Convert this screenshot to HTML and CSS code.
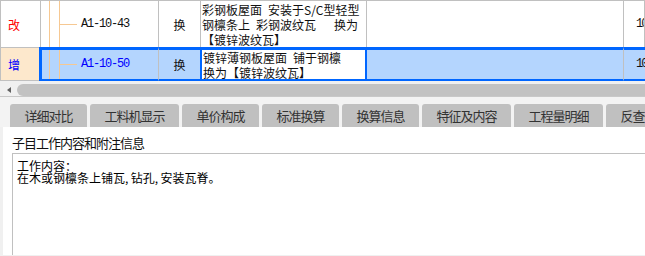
FILE: index.html
```html
<!DOCTYPE html>
<html lang="zh-CN">
<head>
<meta charset="utf-8">
<title>子目工作内容</title>
<link rel="stylesheet" href="styles.css">
</head>
<body>
<div class="grid">
  <div class="row r1">
    <div class="c c0 mod">改</div>
    <div class="c c1"><span class="sp"></span><span class="vl"></span><span class="vl br"><i class="hl"></i></span><span class="code">A1-10-43</span></div>
    <div class="c c2">换</div>
    <div class="c c3"><div class="desc">彩钢板屋面&ensp;安装于S/C型轻型<br>钢檩条上&ensp;彩钢波纹瓦&ensp;&ensp;&ensp;换为<br>【镀锌波纹瓦】</div></div>
    <div class="c c4"></div>
    <div class="c c5"><span class="code">10</span></div>
  </div>
  <div class="row r2">
    <div class="c c0 add">增</div>
    <div class="c c1"><span class="sp"></span><span class="vl"></span><span class="vl br"><i class="hl"></i></span><span class="code blue">A1-10-50</span></div>
    <div class="c c2">换</div>
    <div class="c c3"><div class="desc">镀锌薄钢板屋面&ensp;铺于钢檩<br>换为【镀锌波纹瓦】</div></div>
    <div class="c c4"></div>
    <div class="c c5"><span class="code">10</span></div>
  </div>
</div>
<div class="hscroll">
  <span class="arrow"></span>
  <span class="thumb"></span>
</div>
<div class="tabs">
  <div class="tab">详细对比</div>
  <div class="tab">工料机显示</div>
  <div class="tab">单价构成</div>
  <div class="tab">标准换算</div>
  <div class="tab">换算信息</div>
  <div class="tab">特征及内容</div>
  <div class="tab">工程量明细</div>
  <div class="tab">反查</div>
</div>
<div class="panel">
  <div class="label">子目工作内容和附注信息</div>
  <div class="box">
    <div class="line">工作内容：</div>
    <div class="line">在木或钢檩条上铺瓦,&#8201;钻孔,&#8201;安装瓦脊。</div>
  </div>
</div>
</body>
</html>
```
FILE: styles.css
```css
html, body {
  margin: 0;
  padding: 0;
}
body {
  width: 645px;
  height: 256px;
  overflow: hidden;
  background: #f0f0f0;
  font-family: "Noto Sans CJK SC", "Noto Sans", sans-serif;
  color: #111;
}

.grid {
  background: #fff;
}
.row {
  display: grid;
}
.r1 {
  grid-template-columns: 41px 118px 42px 166px 257px 1fr;
  height: 47px;
  box-sizing: border-box;
  border-top: 1px solid #c0c0c0;
}
.r2 {
  grid-template-columns: 39px 120px 41px 167px 257px 1fr;
  height: 34px;
}
.c {
  box-sizing: border-box;
  border-right: 1px solid #c0c0c0;
  display: flex;
  align-items: center;
  font-size: 12px;
  line-height: 15px;
  overflow: hidden;
  white-space: nowrap;
}
.c0 {
  border-left: 1px solid #c0c0c0;
  padding-left: 7px;
  font-size: 12px;
}
.mod { color: #f00; }
.r2 .c0.add {
  color: #0000ff;
  background: #fde8cc;
  border-top: 1px solid #c0c0c0;
  border-bottom: 1px solid #c0c0c0;
  border-right: none;
}
.r2 .c:not(.c0) {
  background: #b4d5fe;
  border-top: 3px solid #0066ff;
  border-bottom: 2px solid #0066ff;
}
.r2 .c1 {
  border-left: 3px solid #0066ff;
}
.r2 .c2 { border-right: none; }
.r2 .c5 { border-right: none; }
.r2 .c.c3 {
  background: #fff;
  border: 2px solid #0066ff;
  border-top-width: 3px;
  padding-left: 1px;
}
.r1 .c3 { padding-left: 1px; }

.c1 { align-items: stretch; }
.sp { width: 8px; flex: none; }
.r2 .sp { width: 7px; }
.vl {
  box-sizing: border-box;
  width: 10px;
  flex: none;
  border-left: 1px solid #f6c892;
}
.vl.br {
  width: 18px;
  display: flex;
  align-items: center;
}
.hl {
  display: block;
  width: 100%;
  height: 1px;
  background: #f6c892;
}
.code {
  align-self: center;
  margin-left: 4px;
  font-family: "Liberation Mono", "DejaVu Sans Mono", monospace;
  font-size: 12px;
  letter-spacing: -1.2px;
  color: #111;
}
.code.blue { color: #0000ff; }
.c2 { justify-content: center; }
.c5 { padding-left: 8px; }
.c5 .code { letter-spacing: -2px; }

.hscroll {
  height: 16px;
  box-sizing: border-box;
  padding-top: 3px;
  display: flex;
  align-items: flex-start;
  background: #f0f0f0;
  border-bottom: 1px solid #c8c8c8;
}
.arrow {
  width: 0;
  height: 0;
  margin: 3px 0 0 7px;
  border-top: 3.5px solid transparent;
  border-bottom: 3.5px solid transparent;
  border-right: 4px solid #606060;
}
.thumb {
  flex: 1;
  height: 12px;
  margin-left: 6px;
  border-radius: 6px 0 0 6px;
  background: #c2c2c2;
}

.tabs {
  display: flex;
  gap: 3px;
  padding: 7px 0 0 10px;
  height: 30px;
  box-sizing: border-box;
  background: #f3f3f3;
  white-space: nowrap;
  overflow: hidden;
}
.tab {
  flex: none;
  height: 23px;
  padding: 0 14.5px;
  background: #c0c0c0;
  border-radius: 3px 3px 0 0;
  font-size: 13px;
  letter-spacing: -1px;
  line-height: 23px;
  color: #333;
}

.panel {
  margin-left: 3px;
  height: 128px;
  background: #fff;
  padding: 7px 0 0 9px;
  box-sizing: border-box;
  display: flex;
  flex-direction: column;
  overflow: hidden;
}
.label {
  font-size: 13px;
  letter-spacing: -1px;
  line-height: 17px;
  color: #111;
}
.box {
  flex: 1;
  margin-top: 2px;
  border-top: 1px solid #c0c0c0;
  border-left: 1px solid #c0c0c0;
  padding: 6px 4px 0;
  font-size: 12px;
  color: #000;
}
.line {
  height: 12px;
  line-height: 12px;
  white-space: nowrap;
}
```
